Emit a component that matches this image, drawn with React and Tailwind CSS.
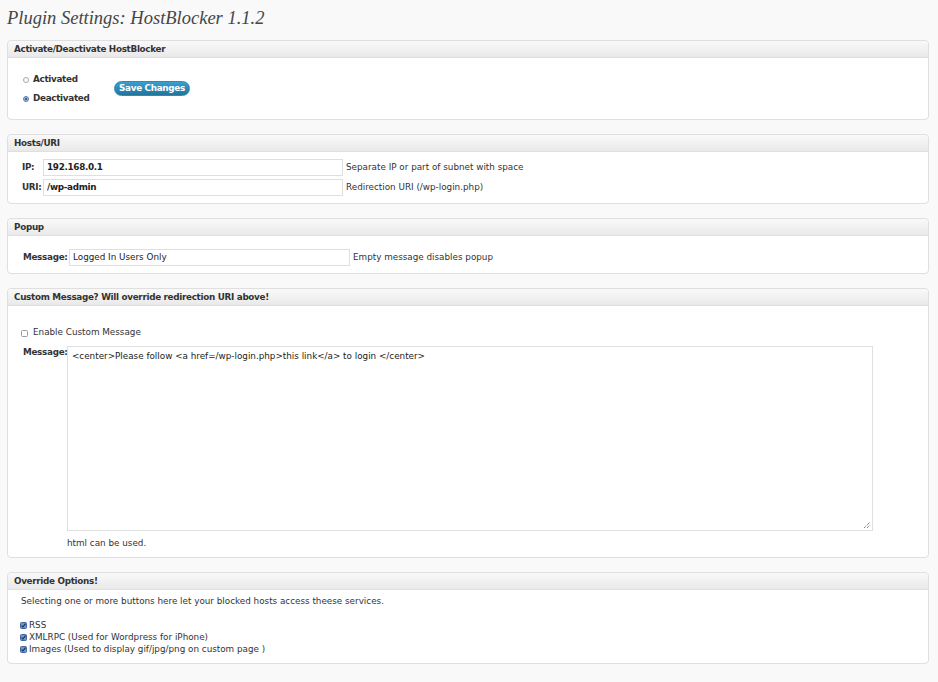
import React from 'react';

const Panel = ({ title, children, className }) => (
  <div className="mb-[14px] rounded-[4px] border border-[#dfdfdf] bg-white">
    <div className="flex h-[17px] items-center rounded-t-[4px] border-b border-[#dfdfdf] bg-gradient-to-b from-[#f9f9f9] to-[#e9e9e9] pl-[6px] pt-[1px] font-bold tracking-[-0.3px] text-[#333]">
      {title}
    </div>
    <div className={className}>{children}</div>
  </div>
);

const Radio = ({ checked }) =>
  checked ? (
    <span className="flex h-[6px] w-[6px] items-center justify-center rounded-full border border-[#5b7fb3] bg-[#9fb8df]">
      <span className="h-[2px] w-[2px] rounded-full bg-[#24467b]" />
    </span>
  ) : (
    <span className="h-[6px] w-[6px] rounded-full border border-[#a8a8a8] bg-white" />
  );

const Check = ({ checked }) =>
  checked ? (
    <svg width="7" height="7" viewBox="0 0 7 7" className="shrink-0">
      <rect x="0.5" y="0.5" width="6" height="6" rx="1" fill="#6d97cf" stroke="#45699c" />
      <path d="M1.6 3.6 L2.9 5 L5.5 1.6" fill="none" stroke="#16305a" strokeWidth="1.1" />
    </svg>
  ) : (
    <svg width="7" height="7" viewBox="0 0 7 7" className="shrink-0">
      <rect x="0.5" y="0.5" width="6" height="6" rx="1" fill="#fff" stroke="#9a9a9a" />
    </svg>
  );

const Field = ({ value, bold, width }) => (
  <div className={`flex h-[17px] items-center border border-[#dfdfdf] bg-white pl-[3px] text-[#222] ${width} ${bold ? 'font-bold tracking-[-0.3px]' : ''}`}>
    {value}
  </div>
);

export default function App() {
  return (
    <div className="min-h-screen bg-[#f9f9f9] pl-[7px] pr-[9px] font-['DejaVu_Sans',sans-serif] text-[8.8px] text-[#333]">
      <h1 className="h-[40px] pt-[7px] font-['Liberation_Serif',serif] text-[18.5px] italic leading-[22px] text-[#464646]">
        Plugin Settings: HostBlocker 1.1.2
      </h1>

      <Panel title="Activate/Deactivate HostBlocker" className="flex h-[61px] items-center pl-[15px]">
        <div className="mt-[2px] flex w-[91px] flex-col">
          <label className="flex h-[19px] items-center gap-[4px] font-bold tracking-[-0.3px] text-[#333]">
            <Radio /> Activated
          </label>
          <label className="flex h-[19px] items-center gap-[4px] font-bold tracking-[-0.3px] text-[#333]">
            <Radio checked /> Deactivated
          </label>
        </div>
        <button className="flex h-[15px] w-[76px] items-center justify-center rounded-full border border-[#298cba] bg-gradient-to-b from-[#3a9fce] to-[#21759b] font-bold tracking-[-0.3px] text-white">
          Save Changes
        </button>
      </Panel>

      <Panel title="Hosts/URI" className="flex flex-col gap-[3px] pb-[7px] pl-[14px] pt-[7px]">
        <div className="flex items-center">
          <span className="w-[21px] font-bold tracking-[-0.3px]">IP:</span>
          <Field value="192.168.0.1" bold width="w-[300px]" />
          <span className="ml-[3px]">Separate IP or part of subnet with space</span>
        </div>
        <div className="flex items-center">
          <span className="w-[21px] font-bold tracking-[-0.3px]">URI:</span>
          <Field value="/wp-admin" bold width="w-[300px]" />
          <span className="ml-[3px]">Redirection URI (/wp-login.php)</span>
        </div>
      </Panel>

      <Panel title="Popup" className="flex items-center pb-[7px] pl-[15px] pt-[13px]">
        <span className="w-[46px] font-bold tracking-[-0.3px]">Message:</span>
        <Field value="Logged In Users Only" width="w-[281px]" />
        <span className="ml-[3px]">Empty message disables popup</span>
      </Panel>

      <Panel title="Custom Message? Will override redirection URI above!" className="pb-[7px] pl-[13px] pt-[21px]">
        <label className="flex h-[12px] items-center gap-[5px]">
          <Check /> Enable Custom Message
        </label>
        <div className="mt-[7px] flex items-start">
          <span className="w-[46px] pl-[2px] font-bold tracking-[-0.3px]">Message:</span>
          <div className="relative h-[185px] w-[806px] border border-[#dfdfdf] bg-white pl-[4px] pt-[3px] text-[#222]">
            {'<center>Please follow <a href=/wp-login.php>this link</a> to login </center>'}
            <svg width="8" height="8" viewBox="0 0 8 8" className="absolute bottom-[1px] right-[1px]">
              <path d="M1 7 L7 1 M4 7 L7 4" stroke="#555" strokeWidth="1" strokeDasharray="1 1" />
            </svg>
          </div>
        </div>
        <div className="mt-[6px] pl-[46px]">html can be used.</div>
      </Panel>

      <Panel title="Override Options!" className="pb-[8px] pl-[12px] pt-[5px]">
        <div className="pl-[1px]">Selecting one or more buttons here let your blocked hosts access theese services.</div>
        <div className="mt-[11px] flex flex-col">
          <label className="flex h-[12px] items-center gap-[2px]">
            <Check checked /> RSS
          </label>
          <label className="flex h-[12px] items-center gap-[2px]">
            <Check checked /> XMLRPC (Used for Wordpress for iPhone)
          </label>
          <label className="flex h-[12px] items-center gap-[2px]">
            <Check checked /> Images (Used to display gif/jpg/png on custom page )
          </label>
        </div>
      </Panel>
    </div>
  );
}
